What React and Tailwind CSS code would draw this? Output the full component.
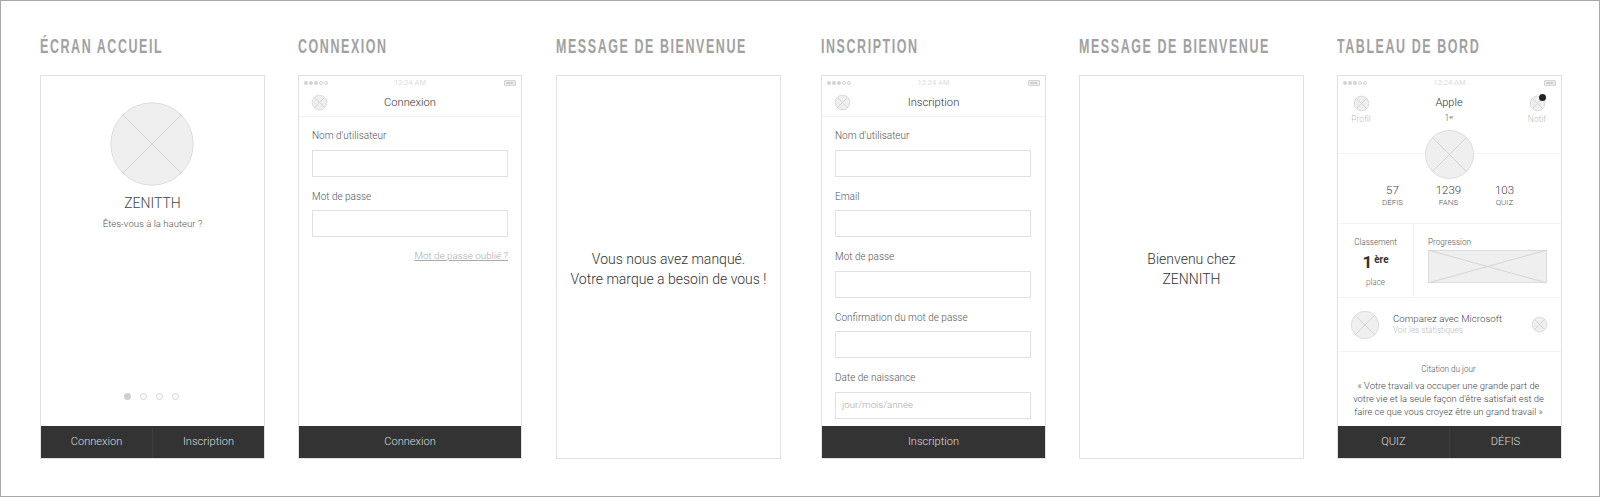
import React from 'react';

const CrossCircle = ({ className = '' }) => (
  <svg viewBox="0 0 100 100" className={`overflow-visible ${className}`}>
    <circle cx="50" cy="50" r="49" fill="#efefef" stroke="#dcdcdc" strokeWidth="1" vectorEffect="non-scaling-stroke" />
    <line x1="15" y1="15" x2="85" y2="85" stroke="#d4d4d4" strokeWidth="1" vectorEffect="non-scaling-stroke" />
    <line x1="85" y1="15" x2="15" y2="85" stroke="#d4d4d4" strokeWidth="1" vectorEffect="non-scaling-stroke" />
  </svg>
);

const StatusBar = () => (
  <div className="flex items-center justify-between h-[13px] px-[5px] shrink-0">
    <div className="flex gap-[1px] w-[30px]">
      <span className="w-[4px] h-[4px] rounded-full bg-[#d4d4d4]" />
      <span className="w-[4px] h-[4px] rounded-full bg-[#d4d4d4]" />
      <span className="w-[4px] h-[4px] rounded-full bg-[#d4d4d4]" />
      <span className="w-[4px] h-[4px] rounded-full border border-[#d4d4d4]" />
      <span className="w-[4px] h-[4px] rounded-full border border-[#d4d4d4]" />
    </div>
    <span className="text-[7.5px] leading-none text-[#dcdcdc]">12:24 AM</span>
    <div className="flex justify-end items-center w-[30px]">
      <div className="w-[12px] h-[6px] border border-[#d4d4d4] rounded-[1px] bg-[#ececec] p-[1px]">
        <div className="w-[7px] h-full bg-[#d0d0d0]" />
      </div>
    </div>
  </div>
);

const NavHeader = ({ title }) => (
  <div className="relative flex items-center justify-center h-[28px] pt-[2px] border-b border-[#f3f3f3] shrink-0">
    <CrossCircle className="absolute left-[13px] top-[6px] w-[15px] h-[15px]" />
    <span className="text-[11.2px] font-light text-[#333]">{title}</span>
  </div>
);

const Field = ({ label, placeholder }) => (
  <div className="flex flex-col">
    <div className="h-[33.5px] pt-[13px] text-[10px] leading-[14px] font-light text-[#555]">{label}</div>
    <div className="h-[27px] border border-[#e0e0e0] flex items-center px-[6px] text-[9.7px] font-light text-[#aaa]">{placeholder}</div>
  </div>
);

const BottomBar = ({ items }) => (
  <div className="flex h-[32.5px] pt-[2px] bg-[#333] shrink-0 mt-auto">
    {items.map((item, i) => (
      <div key={item} className={`flex-1 flex items-center justify-center text-[11.1px] font-light text-[#ddd] ${i > 0 ? 'border-l border-[#3d3d3d]' : ''}`}>
        {item}
      </div>
    ))}
  </div>
);

const Column = ({ title, className, children }) => (
  <div className={`flex flex-col shrink-0 ${className}`}>
    <h2 className="h-[38px] -mt-[1px] mb-[1px] text-[19.5px] leading-[20px] font-bold text-[#a1a1a1] tracking-[2.45px] whitespace-nowrap origin-left scale-x-[0.64] font-['Liberation_Sans',sans-serif]">{title}</h2>
    <div className="flex flex-col h-[384px] border border-[#e1e1e1] bg-white overflow-hidden">{children}</div>
  </div>
);

const Accueil = () => (
  <Column title="ÉCRAN ACCUEIL" className="w-[225px]">
    <div className="flex flex-col items-center flex-1 pt-[26px]">
      <CrossCircle className="w-[84px] h-[84px] mr-[1px]" />
      <div className="mt-[7px] text-[14px] font-light text-[#444]">ZENITTH</div>
      <div className="mt-[3px] text-[9.6px] font-light text-[#555]">Êtes-vous à la hauteur ?</div>
      <div className="flex gap-[9px] mt-auto mb-[26px] mr-[2px]">
        <span className="w-[7px] h-[7px] rounded-full bg-[#cfcfcf]" />
        <span className="w-[7px] h-[7px] rounded-full border border-[#d4d4d4]" />
        <span className="w-[7px] h-[7px] rounded-full border border-[#d4d4d4]" />
        <span className="w-[7px] h-[7px] rounded-full border border-[#d4d4d4]" />
      </div>
    </div>
    <BottomBar items={['Connexion', 'Inscription']} />
  </Column>
);

const Connexion = () => (
  <Column title="CONNEXION" className="w-[224px] ml-[33px]">
    <StatusBar />
    <NavHeader title="Connexion" />
    <div className="flex flex-col -mt-[1px] px-[13px]">
      <Field label="Nom d'utilisateur" />
      <Field label="Mot de passe" />
      <div className="mt-[12px] text-right text-[9.85px] font-light text-[#aaa] underline">Mot de passe oublié ?</div>
    </div>
    <BottomBar items={['Connexion']} />
  </Column>
);

const Message = ({ ml, lines }) => (
  <Column title="MESSAGE DE BIENVENUE" className={`w-[225px] ${ml}`}>
    <div className="flex flex-col flex-1 items-center justify-center pt-[4px] text-[14px] leading-[20px] font-light text-[#333]">
      {lines.map((l) => <div key={l}>{l}</div>)}
    </div>
  </Column>
);

const Inscription = () => (
  <Column title="INSCRIPTION" className="w-[225px] ml-[40px]">
    <StatusBar />
    <NavHeader title="Inscription" />
    <div className="flex flex-col -mt-[1px] pl-[13px] pr-[14px]">
      <Field label="Nom d'utilisateur" />
      <Field label="Email" />
      <Field label="Mot de passe" />
      <Field label="Confirmation du mot de passe" />
      <Field label="Date de naissance" placeholder="jour/mois/année" />
    </div>
    <BottomBar items={['Inscription']} />
  </Column>
);

const Stat = ({ value, label }) => (
  <div className="flex flex-col items-center w-[56px]">
    <span className="text-[11.5px] leading-[13px] font-light text-[#444]">{value}</span>
    <span className="text-[8px] leading-[11px] font-light text-[#555]">{label}</span>
  </div>
);

const Tableau = () => (
  <Column title="TABLEAU DE BORD" className="w-[225px] ml-[33px]">
    <StatusBar />
    <div className="flex justify-between h-[65px] pl-[11px] pr-[12px] pt-[6px] border-b border-[#f3f3f3] shrink-0">
      <div className="flex flex-col items-center w-[24px]">
        <CrossCircle className="w-[15px] h-[15px] mt-[1px]" />
        <span className="mt-[2px] text-[8.5px] font-light text-[#bbb]">Profil</span>
      </div>
      <div className="flex flex-col items-center">
        <span className="text-[11px] leading-[16px] font-light text-[#333]">Apple</span>
        <span className="mt-[1px] text-[8.5px] leading-[12px] font-light text-[#555]">1<sup className="text-[5px]">er</sup></span>
      </div>
      <div className="flex flex-col items-center w-[24px]">
        <div className="relative w-[15px] h-[15px] mt-[1px]">
          <CrossCircle className="w-[15px] h-[15px]" />
          <span className="absolute -right-[1px] -top-[2px] w-[7px] h-[7px] rounded-full bg-[#222]" />
        </div>
        <span className="mt-[2px] text-[8.5px] font-light text-[#bbb]">Notif</span>
      </div>
    </div>
    <div className="flex justify-center -mt-[24px] pr-[1px] shrink-0">
      <CrossCircle className="w-[49px] h-[49px]" />
    </div>
    <div className="flex justify-center h-[45px] pt-[5px] pr-[2px] border-b border-[#f3f3f3] shrink-0">
      <Stat value="57" label="DÉFIS" />
      <Stat value="1239" label="FANS" />
      <Stat value="103" label="QUIZ" />
    </div>
    <div className="flex h-[74px] border-b border-[#f3f3f3] shrink-0">
      <div className="flex flex-col items-center w-[76px] pt-[12px] border-r border-[#f3f3f3]">
        <span className="text-[8.2px] leading-[12px] font-light text-[#555]">Classement</span>
        <span className="mt-[4px] text-[17px] leading-[20px] font-bold text-[#333]">1<sup className="text-[10px] ml-[2px]">ère</sup></span>
        <span className="mt-[4px] text-[8.2px] leading-[12px] font-light text-[#666]">place</span>
      </div>
      <div className="flex flex-col flex-1 pl-[14px] pr-[14px] pt-[12px]">
        <span className="text-[8.2px] leading-[12px] font-light text-[#555]">Progression</span>
        <svg viewBox="0 0 119 33" preserveAspectRatio="none" className="mt-[2px] w-full h-[33px]">
          <rect x="0.5" y="0.5" width="118" height="32" fill="#efefef" stroke="#dcdcdc" />
          <line x1="0" y1="0" x2="119" y2="33" stroke="#d4d4d4" />
          <line x1="119" y1="0" x2="0" y2="33" stroke="#d4d4d4" />
        </svg>
      </div>
    </div>
    <div className="flex items-center h-[54px] pl-[13px] pr-[13px] border-b border-[#f3f3f3] shrink-0">
      <CrossCircle className="w-[28px] h-[28px]" />
      <div className="flex flex-col ml-[14px]">
        <span className="text-[9.7px] leading-[12px] font-light text-[#444]">Comparez avec Microsoft</span>
        <span className="text-[8.2px] leading-[11px] font-light text-[#bbb]">Voir les statistiques</span>
      </div>
      <CrossCircle className="ml-auto mr-[1px] w-[15px] h-[15px]" />
    </div>
    <div className="flex flex-col items-center pt-[11px] pr-[2px] text-center">
      <span className="text-[8.2px] leading-[13px] font-light text-[#555]">Citation du jour</span>
      <p className="mt-[3px] text-[9.4px] leading-[13.2px] font-light text-[#444] whitespace-nowrap">
        « Votre travail va occuper une grande part de<br />
        votre vie et la seule façon d'être satisfait est de<br />
        faire ce que vous croyez être un grand travail »
      </p>
    </div>
    <BottomBar items={['QUIZ', 'DÉFIS']} />
  </Column>
);

export default function App() {
  return (
    <div className="h-[497px] w-[1600px] bg-white border border-[#a8a8a8] overflow-hidden flex items-start pl-[39px] pt-[36px] font-['Roboto','Liberation_Sans',sans-serif]">
      <Accueil />
      <Connexion />
      <Message ml="ml-[34px]" lines={['Vous nous avez manqué.', 'Votre marque a besoin de vous !']} />
      <Inscription />
      <Message ml="ml-[33px]" lines={['Bienvenu chez', 'ZENNITH']} />
      <Tableau />
    </div>
  );
}
